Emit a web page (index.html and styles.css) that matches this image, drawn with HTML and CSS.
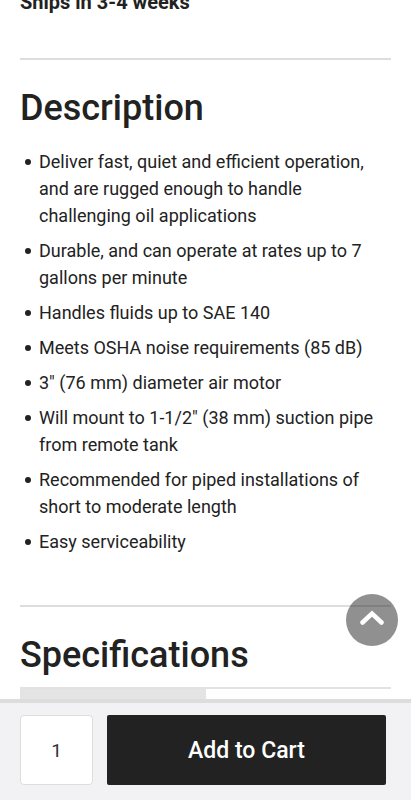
FILE: index.html
```html
<!DOCTYPE html>
<html lang="en">
<head>
<meta charset="utf-8">
<meta name="viewport" content="width=device-width, initial-scale=1">
<title>Product details</title>
<link rel="stylesheet" href="styles.css">
</head>
<body>
<main class="content">
  <p class="shipping">Ships in 3-4 weeks</p>
  <section class="section">
    <h2 class="heading">Description</h2>
    <ul class="features">
      <li>Deliver fast, quiet and efficient operation, and are rugged enough to handle challenging oil applications</li>
      <li>Durable, and can operate at rates up to 7 gallons per minute</li>
      <li>Handles fluids up to SAE 140</li>
      <li>Meets OSHA noise requirements (85 dB)</li>
      <li>3" (76 mm) diameter air motor</li>
      <li>Will mount to 1-1/2" (38 mm) suction pipe from remote tank</li>
      <li>Recommended for piped installations of short to moderate length</li>
      <li>Easy serviceability</li>
    </ul>
  </section>
  <section class="section">
    <h2 class="heading">Specifications</h2>
    <table class="specs" aria-label="Specifications">
      <tr><th scope="row"></th><td></td></tr>
    </table>
  </section>
</main>
<button class="to-top" type="button" aria-label="Back to top">
  <svg class="chevron" viewBox="0 0 24 16" aria-hidden="true"><path d="M2.500 12.500 12 3.500 21.500 12.500" fill="none" stroke="#fff" stroke-width="4.500" stroke-linecap="round" stroke-linejoin="miter"/></svg>
</button>
<form class="cart-bar">
  <input class="quantity" type="text" inputmode="numeric" value="1" aria-label="Quantity">
  <button class="add" type="button">Add to Cart</button>
</form>
</body>
</html>
```
FILE: styles.css
```css
* {
  box-sizing: border-box;
}

body {
  margin: 0;
  height: 100vh;
  display: flex;
  flex-direction: column;
  overflow: hidden;
  background: #fff;
  color: #222;
  font-family: Roboto, sans-serif;
  font-size: 18px;
  line-height: 27px;
}

.content {
  flex: 1;
  min-height: 0;
  overflow: hidden;
  padding: 0 20px;
}

.shipping {
  margin: -11px 0 42px;
  font-size: 20px;
  font-weight: 700;
}

.section {
  border-top: 2px solid #ddd;
  padding-top: 24px;
}

.heading {
  margin: 0;
  font-size: 36px;
  font-weight: 500;
  line-height: 48px;
}

.features {
  margin: 0;
  padding: 16px 0 50px;
  list-style: none;
}

.features li {
  display: flex;
}

.features li::before {
  content: "";
  flex: none;
  width: 6px;
  height: 6px;
  margin: 11px 8px 0 5px;
  border-radius: 50%;
  background: #222;
}

.features li + li {
  margin-top: 8px;
}

.specs {
  width: 100%;
  margin-top: 8px;
  border-collapse: collapse;
  table-layout: fixed;
}

.specs th,
.specs td {
  height: 54px;
  padding: 0;
  border-top: 2px solid #e2e2e2;
}

.specs th {
  background: #e4e4e4;
}

.to-top {
  position: fixed;
  right: 13px;
  bottom: 154px;
  display: grid;
  place-items: center;
  width: 52px;
  height: 52px;
  padding: 0 0 4px;
  border: 0;
  border-radius: 50%;
  background: rgba(34, 34, 34, 0.5);
}

.chevron {
  width: 24px;
  height: 16px;
}

.cart-bar {
  display: flex;
  gap: 14px;
  padding: 12px 25px 15px 20px;
  border-top: 4px solid #dcdddd;
  background: #f2f2f4;
}

.quantity,
.add {
  height: 70px;
  font-family: inherit;
}

.quantity {
  width: 73px;
  padding: 0;
  border: 1px solid #ddd;
  border-radius: 4px;
  background: #fff;
  color: #333;
  font-size: 19px;
  text-align: center;
}

.add {
  flex: 1;
  border: 0;
  border-radius: 2px;
  background: #222;
  color: #fff;
  font-size: 23px;
  font-weight: 500;
}
```
